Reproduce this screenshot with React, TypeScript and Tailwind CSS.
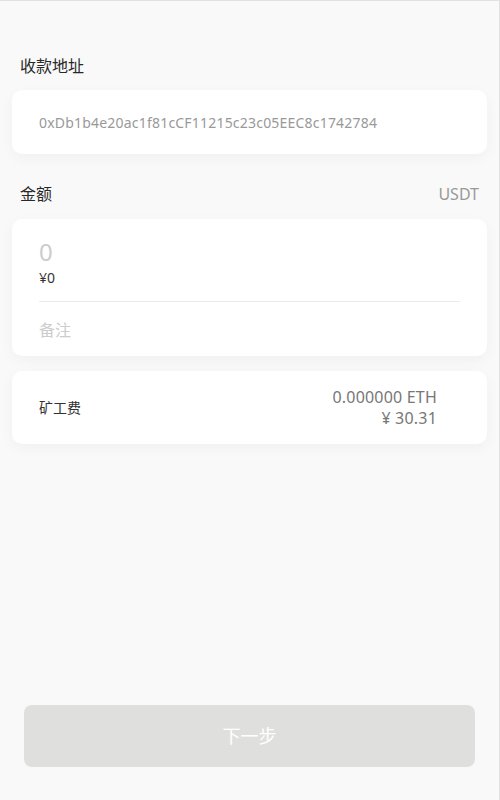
const font = { fontFamily: '"Noto Sans", "Noto Sans CJK SC", sans-serif' };

const Card = ({ children, className = "" }: { children: React.ReactNode; className?: string }) => (
  <div className={`mx-3 rounded-[10px] bg-white shadow-[0_4px_14px_rgba(0,0,0,0.04)] ${className}`}>
    {children}
  </div>
);

export default function App() {
  return (
    <div
      className="flex h-[800px] flex-col border-t border-r border-[#e2e2e2] bg-[#f8f9f8] font-['Noto_Sans','Noto_Sans_CJK_SC',sans-serif]"
    >
      {/* 收款地址 */}
      <p className="mt-[53px] pl-5 text-[16px] leading-6 text-[#282828]">收款地址</p>
      <Card className="mt-3 flex h-16 items-center pl-[27px]">
        <span className="text-[14px] tracking-[0.2px] text-[#999]">0xDb1b4e20ac1f81cCF11215c23c05EEC8c1742784</span>
      </Card>

      {/* 金额 */}
      <div className="mt-[28px] flex items-center justify-between px-5">
        <span className="text-[16px] leading-6 text-[#282828]">金额</span>
        <span className="text-[16px] leading-6 text-[#999]">USDT</span>
      </div>
      <Card className="mt-[13px] px-[27px] pt-[17px] pb-[14px]">
        <div className="text-[24px] leading-8 text-[#ccc]">0</div>
        <div className="text-[14px] leading-5 text-[#333]">¥0</div>
        <div className="mt-[13px] border-t border-[#ececec]" />
        <div className="pt-[16px] text-[16px] leading-6 text-[#ccc]">备注</div>
      </Card>

      {/* 矿工费 */}
      <Card className="mt-[15px] flex h-[73px] items-center justify-between pl-[27px] pr-[50px]">
        <span className="text-[14px] text-[#333]">矿工费</span>
        <div className="flex flex-col items-end text-[16px] leading-[21px] tracking-[0.2px] text-[#777]">
          <span>0.000000 ETH</span>
          <span>¥ 30.31</span>
        </div>
      </Card>

      <div className="flex-1" />
      <div className="px-6 pb-[33px]">
        <button
          style={font}
          className="h-[62px] w-full rounded-lg bg-[#dfe0de] text-[18px] text-white"
        >
          下一步
        </button>
      </div>
    </div>
  );
}
